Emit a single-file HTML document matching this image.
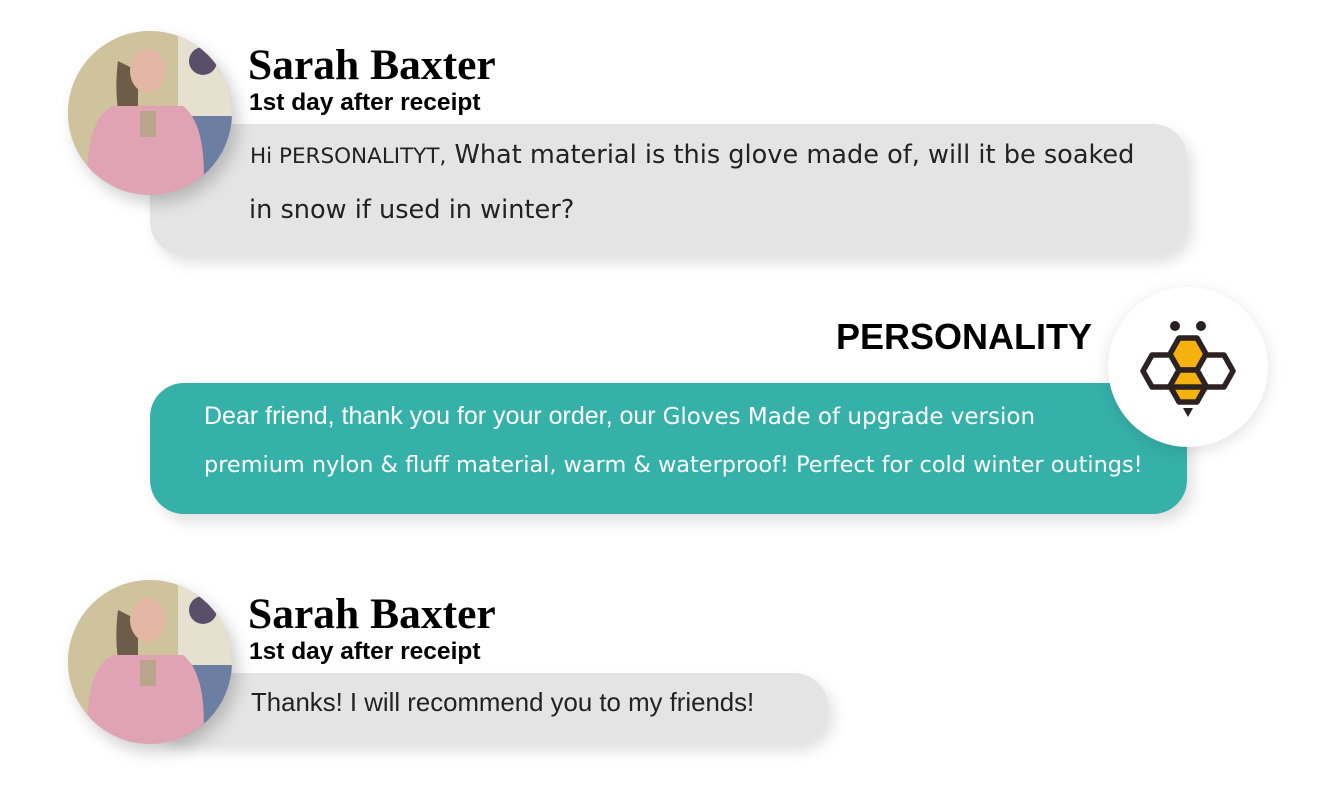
<!DOCTYPE html>
<html><head><style>
body{margin:0;width:1320px;height:793px;background:#fff;position:relative;overflow:hidden;font-family:"Liberation Sans",sans-serif}
.b{position:absolute;border-radius:34px;box-shadow:6px 8px 14px rgba(0,0,0,.12)}
.av{position:absolute;width:164px;height:164px;border-radius:50%;overflow:hidden;box-shadow:6px 8px 16px rgba(0,0,0,.2);background:#c8b894}
.nm{position:absolute;font-family:"Liberation Serif",serif;font-weight:bold;font-size:43.5px;color:#000}
.sub{position:absolute;font-weight:bold;font-size:24.5px;color:#000}
.t{position:absolute;font-family:"DejaVu Sans","Liberation Sans",sans-serif;font-size:23px;color:#222;white-space:nowrap}
</style></head><body>
<div class="b" style="left:150px;top:124px;width:1037px;height:131px;background:#e4e4e4"></div>
<div class="b" style="left:150px;top:383px;width:1037px;height:131px;background:#36b1aa"></div>
<div class="b" style="left:150px;top:673px;width:678px;height:70px;background:#e4e4e4"></div>

<div class="av" style="left:68px;top:31px">
<svg width="164" height="164" viewBox="0 0 164 164">
<rect width="164" height="164" fill="#cfc39e"/>
<rect x="110" y="0" width="54" height="90" fill="#e6e0d0"/>
<rect x="115" y="85" width="49" height="79" fill="#6c7fa3"/>
<circle cx="135" cy="30" r="14" fill="#5a4f6a"/>
<path d="M50 30 Q45 70 55 100 L70 100 L70 40Z" fill="#6d5d48"/>
<ellipse cx="80" cy="40" rx="18" ry="22" fill="#e3b7a3"/>
<path d="M20 164 Q15 90 45 75 L115 75 Q140 95 135 164Z" fill="#e0a3b3"/>
<rect x="72" y="80" width="16" height="26" fill="#b8a58c"/>
</svg></div>
<div class="nm" style="left:248px;top:40px">Sarah Baxter</div>
<div class="sub" style="left:249px;top:89px">1st day after receipt</div>
<div class="t" style="left:250px;top:140px;font-size:25.6px"><span style="font-size:21.5px">Hi PERSONALITYT,</span> What material is this glove made of, will it be soaked</div>
<div class="t" style="left:249px;top:195px;font-size:25.6px">in snow if used in winter?</div>

<div style="position:absolute;left:836px;top:316px;font-size:36px;font-weight:bold;color:#000">PERSONALITY</div>
<div class="t" style="left:204px;top:402px;color:#fff;font-family:'Liberation Sans',sans-serif;font-size:25px">Dear friend, thank you for your order, our <span style="font-family:'DejaVu Sans';font-size:23px">Gloves Made of upgrade version</span></div>
<div class="t" style="left:204px;top:452px;color:#fff;font-size:22.4px">premium nylon &amp; fluff material, warm &amp; waterproof! Perfect for cold winter outings!</div>
<div style="position:absolute;left:1108px;top:287px;width:160px;height:160px;border-radius:50%;background:#fff;box-shadow:0 4px 16px rgba(0,0,0,.12)">
<svg width="160" height="160" viewBox="1108 287 160 160">
<circle cx="1175" cy="326" r="5" fill="#2a2020"/><circle cx="1201" cy="326" r="5" fill="#2a2020"/>
<g stroke="#2d2222" stroke-width="5.5" stroke-linejoin="round">
<polygon points="1152,355 1172,355 1180,371 1172,387 1152,387 1143,371" fill="none"/>
<polygon points="1204,355 1224,355 1233,371 1224,387 1204,387 1196,371" fill="none"/>
<polygon points="1179,338 1197,338 1206,354 1197,370 1179,370 1170,354" fill="#f5b10f"/>
<polygon points="1179,370 1197,370 1206,386 1197,402 1179,402 1170,386" fill="#f5b10f"/>
<line x1="1171" y1="387" x2="1205" y2="387"/>
</g>
<polygon points="1183,408 1193,408 1188,417" fill="#2a2020"/>
</svg></div>

<div class="av" style="left:68px;top:580px">
<svg width="164" height="164" viewBox="0 0 164 164">
<rect width="164" height="164" fill="#cfc39e"/>
<rect x="110" y="0" width="54" height="90" fill="#e6e0d0"/>
<rect x="115" y="85" width="49" height="79" fill="#6c7fa3"/>
<circle cx="135" cy="30" r="14" fill="#5a4f6a"/>
<path d="M50 30 Q45 70 55 100 L70 100 L70 40Z" fill="#6d5d48"/>
<ellipse cx="80" cy="40" rx="18" ry="22" fill="#e3b7a3"/>
<path d="M20 164 Q15 90 45 75 L115 75 Q140 95 135 164Z" fill="#e0a3b3"/>
<rect x="72" y="80" width="16" height="26" fill="#b8a58c"/>
</svg></div>
<div class="nm" style="left:248px;top:589px">Sarah Baxter</div>
<div class="sub" style="left:249px;top:638px">1st day after receipt</div>
<div class="t" style="left:251px;top:689px;font-family:'Liberation Sans',sans-serif;font-size:25.8px">Thanks! I will recommend you to my friends!</div>
</body></html>
